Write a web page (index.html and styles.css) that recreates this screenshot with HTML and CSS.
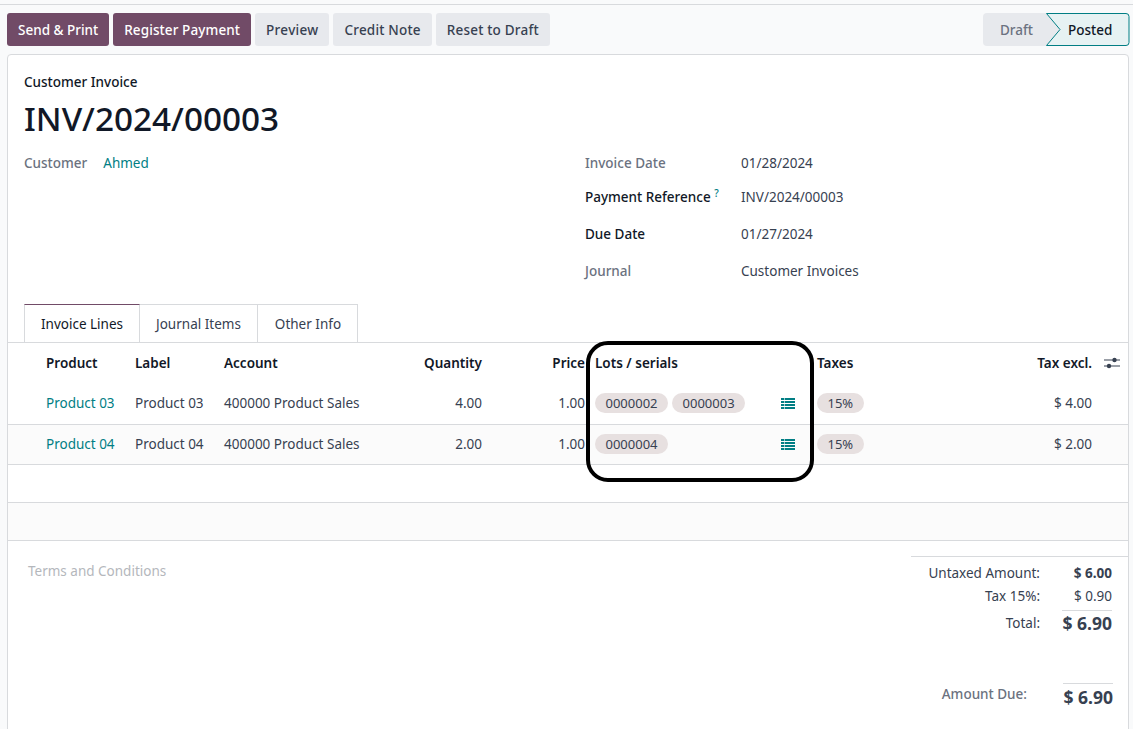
FILE: index.html
```html
<!DOCTYPE html>
<html lang="en">
<head>
    <meta charset="UTF-8">
    <meta name="viewport" content="width=device-width, initial-scale=1.0">
    <title>INV/2024/00003</title>
    <link rel="stylesheet" href="styles.css">
</head>
<body>

    <div class="toolbar">
        <div class="actions">
            <button class="btn btn-primary">Send &amp; Print</button>
            <button class="btn btn-primary btn-tight">Register Payment</button>
            <button class="btn btn-wider">Preview</button>
            <button class="btn btn-spaced">Credit Note</button>
            <button class="btn btn-spaced">Reset to Draft</button>
        </div>
        <div class="statusbar">
            <span class="status">Draft</span>
            <span class="status status-current">
                <svg class="status-shape" width="84" height="33" viewBox="0 0 84 33">
                    <path d="M.5 .5H80a3 3 0 0 1 3 3V29.5a3 3 0 0 1-3 3H.5L14 16.5Z" fill="#e6f2f3" stroke="#017e84"/>
                </svg>
                <span class="status-text">Posted</span>
            </span>
        </div>
    </div>

    <div class="sheet">
        <div class="head">
            <div class="doc-type">Customer Invoice</div>
            <h1 class="doc-name">INV/2024/00003</h1>
        </div>

        <div class="groups">
            <div class="group-left">
                <span class="label">Customer</span>
                <a class="link">Ahmed</a>
            </div>
            <div class="group-right">
                <span class="label">Invoice Date</span>
                <span class="value">01/28/2024</span>
                <span class="label label-strong">Payment Reference <sup class="help">?</sup></span>
                <span class="value">INV/2024/00003</span>
                <span class="label label-strong">Due Date</span>
                <span class="value">01/27/2024</span>
                <span class="label">Journal</span>
                <span class="value">Customer Invoices</span>
            </div>
        </div>

        <div class="tabs">
            <div class="tab tab-active">Invoice Lines</div>
            <div class="tab">Journal Items</div>
            <div class="tab tab-last">Other Info</div>
        </div>

        <div class="lines">
            <table class="lines-table">
                <colgroup>
                    <col class="col-product">
                    <col class="col-label">
                    <col class="col-account">
                    <col class="col-qty">
                    <col class="col-price">
                    <col class="col-lots">
                    <col class="col-taxes">
                    <col class="col-subtotal">
                    <col class="col-opt">
                </colgroup>
                <thead>
                    <tr>
                        <th class="cell-product">Product</th>
                        <th>Label</th>
                        <th>Account</th>
                        <th class="num">Quantity</th>
                        <th class="num cell-price">Price</th>
                        <th>Lots / serials</th>
                        <th class="cell-taxes">Taxes</th>
                        <th class="num">Tax excl.</th>
                        <th class="cell-opt">
                            <svg width="16" height="14" viewBox="0 0 16 14">
                                <path d="M0 4h16M0 10h16" stroke="#374151" stroke-width="1.2"/>
                                <circle cx="10.5" cy="4" r="2.2" fill="#374151"/>
                                <circle cx="5" cy="10" r="2.2" fill="#374151"/>
                            </svg>
                        </th>
                    </tr>
                </thead>
                <tbody>
                    <tr class="line line-first">
                        <td class="cell-product"><a class="link">Product 03</a></td>
                        <td>Product 03</td>
                        <td>400000 Product Sales</td>
                        <td class="num">4.00</td>
                        <td class="num cell-price">1.00</td>
                        <td>
                            <div class="lots">
                                <span class="tag">0000002</span>
                                <span class="tag">0000003</span>
                                <svg class="list-icon" width="14" height="11" viewBox="0 0 14 11">
                                    <path d="M0 0h3v2H0zM3.6 0H14v2H3.6zM0 3h3v2H0zM3.6 3H14v2H3.6zM0 6h3v2H0zM3.6 6H14v2H3.6zM0 9h3v2H0zM3.6 9H14v2H3.6z" fill="#017e84"/>
                                </svg>
                            </div>
                        </td>
                        <td class="cell-taxes"><span class="tag">15%</span></td>
                        <td class="num">$ 4.00</td>
                        <td></td>
                    </tr>
                    <tr class="line line-alt">
                        <td class="cell-product"><a class="link">Product 04</a></td>
                        <td>Product 04</td>
                        <td>400000 Product Sales</td>
                        <td class="num">2.00</td>
                        <td class="num cell-price">1.00</td>
                        <td>
                            <div class="lots">
                                <span class="tag">0000004</span>
                                <svg class="list-icon" width="14" height="11" viewBox="0 0 14 11">
                                    <path d="M0 0h3v2H0zM3.6 0H14v2H3.6zM0 3h3v2H0zM3.6 3H14v2H3.6zM0 6h3v2H0zM3.6 6H14v2H3.6zM0 9h3v2H0zM3.6 9H14v2H3.6z" fill="#017e84"/>
                                </svg>
                            </div>
                        </td>
                        <td class="cell-taxes"><span class="tag">15%</span></td>
                        <td class="num">$ 2.00</td>
                        <td></td>
                    </tr>
                    <tr class="line-empty"><td colspan="9"></td></tr>
                    <tr class="line-foot"><td colspan="9"></td></tr>
                </tbody>
            </table>
            <div class="highlight"></div>
        </div>

        <div class="bottom">
            <div class="terms">Terms and Conditions</div>
            <div class="totals">
                <div class="total-row">
                    <span class="total-label">Untaxed Amount:</span>
                    <span class="total-value total-bold">$ 6.00</span>
                </div>
                <div class="total-row">
                    <span class="total-label">Tax 15%:</span>
                    <span class="total-value">$ 0.90</span>
                </div>
                <div class="total-row total-grand">
                    <span class="total-label">Total:</span>
                    <span class="total-value total-big">$ 6.90</span>
                </div>
                <div class="total-row total-due">
                    <span class="total-label total-label-due">Amount Due:</span>
                    <span class="total-value total-big">$ 6.90</span>
                </div>
            </div>
        </div>
    </div>

</body>
</html>
```

FILE: styles.css
```css
html, body {
    height: 100%;
}

body {
    background-color: #f9fafb;
    font-family: 'Noto Sans', 'Open Sans', sans-serif;
    font-size: 13.5px;
    color: #374151;
    margin: 0;
    padding-top: 4px;
    box-sizing: border-box;
    overflow: hidden;
}

/* Top bar */
.toolbar {
    border-top: 1px solid #d8dadd;
    display: flex;
    justify-content: space-between;
    padding: 8px 4px 8px 7px;
}

.actions {
    display: flex;
    gap: 4px;
}

.btn {
    font: inherit;
    font-weight: 500;
    height: 33px;
    padding: 0 11px;
    background-color: #e7e9ed;
    color: #374151;
    border: none;
    border-radius: 3px;
    cursor: pointer;
}

.btn-spaced {
    letter-spacing: 0.2px;
}

.btn-tight {
    letter-spacing: 0.1px;
}

.btn-wider {
    letter-spacing: 0.3px;
}

.btn-primary {
    background-color: #714b67;
    color: #fff;
}

.statusbar {
    display: flex;
    width: 146px;
    height: 33px;
    background-color: #e7e9ed;
    border-radius: 4px;
    font-weight: 500;
}

.status {
    display: flex;
    align-items: center;
    width: 63px;
    padding-left: 17px;
    box-sizing: border-box;
    color: #6b7280;
}

.status-current {
    position: relative;
    width: 83px;
    padding-left: 22px;
    color: #111827;
}

.status-shape {
    position: absolute;
    top: 0;
    left: 0;
}

.status-text {
    position: relative;
}

/* Sheet */
.sheet {
    margin-left: 7px;
    margin-right: 4px;
    background-color: #fff;
    border: 1px solid #d8dadd;
    border-radius: 4px 4px 0 0;
    height: 700px;
    box-sizing: border-box;
}

.head {
    padding: 18px 16px 0;
}

.doc-type {
    font-weight: 500;
    color: #111827;
    line-height: 18px;
}

.doc-name {
    font-size: 33.3px;
    font-weight: 500;
    line-height: 44px;
    margin: 5px 0 0;
    color: #111827;
}

.groups {
    display: flex;
    height: 151px;
    padding: 13px 16px 0;
    line-height: 20px;
}

.group-left {
    width: 561px;
    display: flex;
    gap: 16px;
}

.group-right {
    display: grid;
    grid-template-columns: 156px auto;
    grid-template-rows: 34px 37px 37px 37px;
}

.label {
    color: #6b7280;
    font-weight: 500;
}

.label-strong {
    color: #111827;
}

.help {
    color: #017e84;
    font-size: 10px;
    line-height: 0;
}

.link {
    color: #017e84;
}

.tabs {
    display: flex;
    height: 39px;
    padding-left: 16px;
    margin-bottom: -1px;
    position: relative;
}

.tab {
    display: flex;
    align-items: center;
    padding: 0 16px;
    border: 1px solid #d8dadd;
    border-left-width: 0;
}

.tab-last {
    padding-left: 17px;
}

.tab-active {
    color: #111827;
    background-color: #fff;
    border-left-width: 1px;
    border-top-color: #714b67;
    border-bottom-color: #fff;
}

/* Lines table */
.lines {
    position: relative;
    border-top: 1px solid #d8dadd;
}

.lines-table {
    width: 100%;
    table-layout: fixed;
    border-collapse: collapse;
}

.col-product { width: 119px; }
.col-label { width: 89px; }
.col-account { width: 164px; }
.col-qty { width: 110px; }
.col-price { width: 97px; }
.col-lots { width: 224px; }
.col-taxes { width: 89px; }
.col-subtotal { width: 200px; }

th, td {
    padding: 0 8px;
    text-align: left;
    white-space: nowrap;
}

th {
    font-weight: 600;
    color: #111827;
    height: 40px;
}

td {
    height: 40px;
}

.line td {
    padding-bottom: 1px;
    box-sizing: border-box;
}

.line-first td {
    height: 41px;
}

.line-alt td {
    height: 40px;
}

.lines-table .num {
    text-align: right;
}

.lines-table .cell-product {
    padding-left: 38px;
}

.lines-table .cell-price {
    padding-right: 2px;
}

.lines-table .cell-taxes {
    padding-left: 6px;
}

.lines-table .cell-opt {
    padding: 0 0 0 4px;
}

.cell-opt svg {
    display: block;
}

.line {
    border-bottom: 1px solid #d8dadd;
}

.line-alt {
    background-color: #fbfbfb;
}

.line-empty td {
    height: 37px;
    border-bottom: 1px solid #d8dadd;
}

.line-foot td {
    height: 37px;
    background-color: #fbfbfb;
    border-bottom: 1px solid #d8dadd;
}

.lots {
    display: flex;
    align-items: center;
    gap: 4px;
}

.tag {
    display: inline-block;
    height: 20px;
    line-height: 20px;
    padding: 0 10.5px;
    background-color: #e7e0e0;
    border-radius: 10px;
    font-size: 13px;
}

.list-icon {
    margin: 2px 8px 0 auto;
}

/* Marker drawn around the lots column */
.highlight {
    position: absolute;
    top: -2px;
    left: 578px;
    width: 228px;
    height: 141px;
    box-sizing: border-box;
    border: 4px solid #000;
    border-radius: 22px;
}

/* Bottom */
.bottom {
    display: flex;
    justify-content: space-between;
    padding-top: 15px;
}

.terms {
    padding: 6px 0 0 20px;
    color: #b4b7bc;
}

.totals {
    width: 217px;
    border-top: 1px solid #d8dadd;
    padding: 5px 16px 0 0;
    box-sizing: border-box;
}

.total-row {
    display: flex;
    justify-content: flex-end;
    align-items: center;
    height: 23px;
}

.total-label {
    margin-right: 22px;
}

.total-value {
    width: 50px;
    text-align: right;
    white-space: nowrap;
}

.total-bold {
    font-weight: 700;
}

.total-grand .total-value,
.total-due .total-value {
    border-top: 1px solid #d8dadd;
}

.total-grand,
.total-due {
    height: 27px;
}

.total-grand {
    margin-top: 2px;
}

.total-big {
    font-size: 17.5px;
    font-weight: 700;
    line-height: 25px;
}

.total-due {
    margin-top: 46px;
    margin-right: -1px;
    align-items: flex-start;
}

.total-due .total-big {
    line-height: 27px;
}

.total-label-due {
    color: #6b7280;
    font-weight: 500;
    margin-right: 36px;
    padding-top: 2px;
}
```
